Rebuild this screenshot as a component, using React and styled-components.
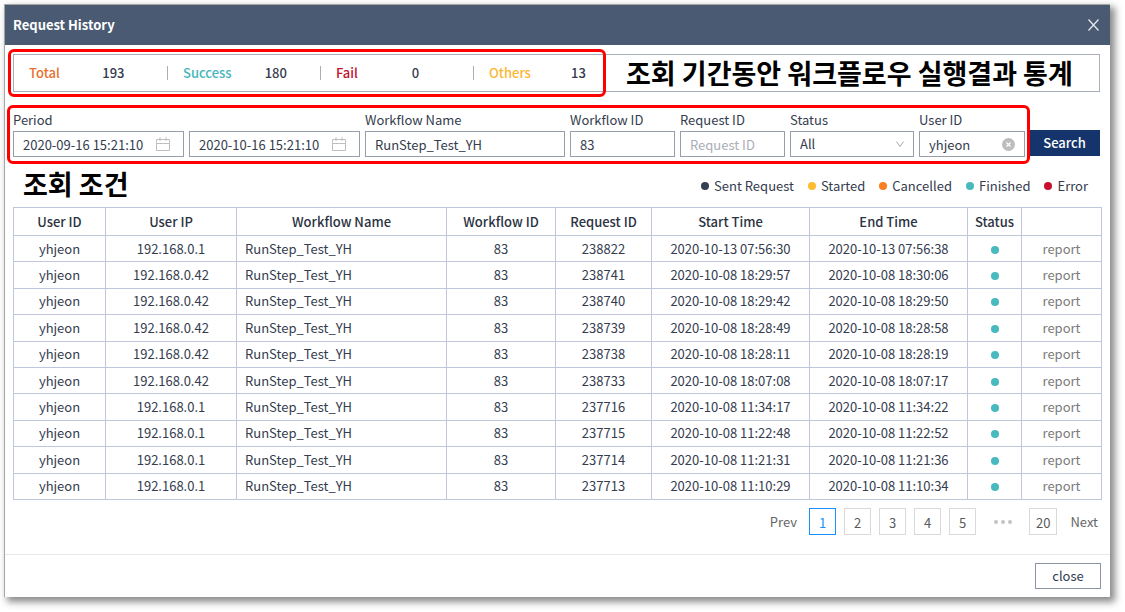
import React, { useState } from "react";
import styled, { createGlobalStyle } from "styled-components";

const GlobalStyle = createGlobalStyle`
  *, *::before, *::after { box-sizing: border-box; }
  body {
    margin: 0;
    background: #fff;
    color: #343c4e;
    font: 400 13px/20px "Noto Sans CJK KR", "Noto Sans", sans-serif;
  }
  button, input, select { font: inherit; color: inherit; margin: 0; }
`;

const Dialog = styled.section`
  margin: 4px 15px 14px 4px;
  border: 1px solid #a6a6a6;
  border-width: 1px 0 0 1px;
  background: #fff;
  box-shadow: 4px 4px 7px 1px #8c8c8c;
`;

const Header = styled.header`
  display: flex;
  align-items: center;
  justify-content: space-between;
  height: 40px;
  padding: 0 11px 0 8px;
  background: #4a5a73;
  color: #fff;
`;

const Title = styled.h1`
  margin: 0;
  font-size: 13px;
  line-height: 20px;
  font-weight: 700;
`;

const IconButton = styled.button`
  display: flex;
  padding: 0;
  border: 0;
  background: none;
  cursor: pointer;
`;

const Body = styled.div`
  padding: 9px 10px 0 8px;
`;

const Stats = styled.div`
  position: relative;
  display: flex;
  align-items: center;
  height: 38px;
  border: 1px solid #a9afb9;
`;

const Stat = styled.div`
  display: flex;
  align-items: center;
  flex: 0 0 153px;
  padding-left: 15px;
  line-height: 14px;
  & + & { border-left: 1px solid #a9afb9; }
`;

const StatLabel = styled.span`
  font-weight: 500;
  color: ${(p) => p.$color};
`;

const StatValue = styled.span`
  flex: 1;
  text-align: center;
  font-weight: 500;
`;

const Note = styled.strong`
  color: #000;
  font-size: 27px;
  line-height: 30px;
  font-weight: 700;
  white-space: nowrap;
`;

const Highlight = styled.span`
  position: absolute;
  inset: ${(p) => p.$inset};
  border: 3px solid #f00;
  border-radius: 6px;
  pointer-events: none;
`;

const FilterBar = styled.form`
  display: flex;
  align-items: flex-end;
  gap: 4px;
  margin-top: 18px;
`;

const Filters = styled.div`
  position: relative;
  flex: 1;
  display: grid;
  grid-template-columns: 347fr 200fr 105fr 105fr 124fr 106fr;
  gap: 5px;
`;

const Field = styled.div`
  min-width: 0;
`;

const Label = styled.label`
  display: block;
  height: 21px;
  white-space: nowrap;
`;

const Range = styled.div`
  display: grid;
  grid-template-columns: 1fr 1fr;
  gap: 5px;
`;

const Control = styled.div`
  display: flex;
  align-items: center;
  height: 26px;
  padding: 0 ${(p) => p.$end || 9}px 0 9px;
  border: 1px solid #979eaa;
  background: #fff;
  svg { flex: none; }
`;

const TextInput = styled.input`
  flex: 1;
  min-width: 0;
  width: 100%;
  height: 24px;
  padding: 0;
  border: 0;
  outline: 0;
  background: none;
  &::placeholder { color: #a9aeb8; opacity: 1; }
`;

const Select = styled.select`
  flex: 1;
  min-width: 0;
  height: 24px;
  padding: 0;
  border: 0;
  outline: 0;
  appearance: none;
  background: none;
`;

const SearchButton = styled.button`
  width: 71px;
  height: 26px;
  margin-bottom: 1px;
  padding: 0;
  border: 0;
  background: #14346b;
  color: #fff;
  font-weight: 500;
  cursor: pointer;
`;

const LegendRow = styled.div`
  display: flex;
  align-items: center;
  justify-content: space-between;
  height: 50px;
  padding: 3px 12px 0 10px;
`;

const Legend = styled.ul`
  display: flex;
  gap: 14px;
  margin: 0;
  padding: 5px 0 0;
  list-style: none;
`;

const LegendItem = styled.li`
  display: flex;
  align-items: center;
  gap: 5px;
`;

const Dot = styled.span`
  display: inline-block;
  width: 8px;
  height: 8px;
  border-radius: 50%;
  background: ${(p) => p.$color};
`;

const Table = styled.table`
  width: 100%;
  height: 293px;
  table-layout: fixed;
  border-collapse: collapse;
`;

const Th = styled.th`
  height: 28px;
  padding: 0;
  border: 1px solid #c0c7dc;
  font-weight: 500;
  color: #2b3342;
`;

const Td = styled.td`
  padding: 0 8px;
  border: 1px solid #c0c7dc;
  line-height: 20px;
  text-align: ${(p) => p.$align || "center"};
  white-space: nowrap;
`;

const ReportLink = styled.a`
  color: #7b7b7b;
  text-decoration: none;
`;

const Pager = styled.nav`
  display: flex;
  align-items: center;
  justify-content: flex-end;
  gap: 8px;
  margin-top: 8px;
  padding-right: 2px;
`;

const PageText = styled.button`
  padding: 0;
  margin: ${(p) => p.$margin};
  border: 0;
  background: none;
  color: #666;
  cursor: pointer;
`;

const PageButton = styled.button`
  min-width: 27px;
  height: 27px;
  padding: 2px 6px 0;
  border: 1px solid ${(p) => (p.$active ? "#1890ff" : "#d9d9d9")};
  background: #fff;
  color: ${(p) => (p.$active ? "#1890ff" : "#595959")};
  cursor: pointer;
`;

const Ellipsis = styled.span`
  display: flex;
  justify-content: center;
  gap: 3px;
  width: 37px;
  i { width: 4px; height: 4px; border-radius: 50%; background: #c4c4c4; }
`;

const Footer = styled.footer`
  display: flex;
  justify-content: flex-end;
  margin-top: 19px;
  padding: 8px 9px;
  border-top: 1px solid #e8e8e8;
`;

const CloseButton = styled.button`
  width: 66px;
  height: 26px;
  padding: 0;
  border: 1px solid #8d95a5;
  background: #fff;
  cursor: pointer;
`;

const CalendarIcon = () => (
  <svg width="14" height="14" viewBox="0 0 14 14" fill="none" stroke="#bfbfbf" aria-hidden="true">
    <path d="M.5 2.5h13v11H.5zM.5 6.5h13M4 0v4M10 0v4" />
  </svg>
);

const ChevronIcon = () => (
  <svg width="8" height="8" viewBox="0 0 8 8" fill="none" stroke="#a8a8a8" aria-hidden="true">
    <path d="M.5 1.5 4 6.5l3.500-5" />
  </svg>
);

const ClearIcon = () => (
  <svg width="13" height="13" viewBox="0 0 13 13" aria-hidden="true">
    <circle cx="6.500" cy="6.500" r="6.500" fill="#bdbdbd" />
    <path d="m4.500 4.500 4 4m0-4-4 4" stroke="#fff" strokeWidth="1.200" />
  </svg>
);

const CrossIcon = () => (
  <svg width="11" height="12" viewBox="0 0 11 12" fill="none" stroke="#e4e7ec" strokeWidth="1.300" aria-hidden="true">
    <path d="m.5.5 10 11m0-11-10 11" />
  </svg>
);

const stats = [
  ["Total", 193, "#e8702c"],
  ["Success", 180, "#48b6bb"],
  ["Fail", 0, "#c4122f"],
  ["Others", 13, "#fbb632"],
];

const legend = [
  ["Sent Request", "#343f52"],
  ["Started", "#fdbb30"],
  ["Cancelled", "#fb7e23"],
  ["Finished", "#48b9be"],
  ["Error", "#c8102e"],
];

const columns = [
  ["User ID", 92],
  ["User IP", 131],
  ["Workflow Name", 210],
  ["Workflow ID", 109],
  ["Request ID", 96],
  ["Start Time", 158],
  ["End Time", 158],
  ["Status", 54],
  ["", 80],
];

const rows = [
  ["192.168.0.1", 238822, "2020-10-13 07:56:30", "2020-10-13 07:56:38"],
  ["192.168.0.42", 238741, "2020-10-08 18:29:57", "2020-10-08 18:30:06"],
  ["192.168.0.42", 238740, "2020-10-08 18:29:42", "2020-10-08 18:29:50"],
  ["192.168.0.42", 238739, "2020-10-08 18:28:49", "2020-10-08 18:28:58"],
  ["192.168.0.42", 238738, "2020-10-08 18:28:11", "2020-10-08 18:28:19"],
  ["192.168.0.42", 238733, "2020-10-08 18:07:08", "2020-10-08 18:07:17"],
  ["192.168.0.1", 237716, "2020-10-08 11:34:17", "2020-10-08 11:34:22"],
  ["192.168.0.1", 237715, "2020-10-08 11:22:48", "2020-10-08 11:22:52"],
  ["192.168.0.1", 237714, "2020-10-08 11:21:31", "2020-10-08 11:21:36"],
  ["192.168.0.1", 237713, "2020-10-08 11:10:29", "2020-10-08 11:10:34"],
];

export default function App() {
  const [page, setPage] = useState(1);
  const [user, setUser] = useState("yhjeon");

  return (
    <>
      <GlobalStyle />
      <Dialog role="dialog" aria-labelledby="title">
        <Header>
          <Title id="title">Request History</Title>
          <IconButton type="button" aria-label="Close dialog"><CrossIcon /></IconButton>
        </Header>
        <Body>
          <Stats>
            {stats.map(([name, value, color]) => (
              <Stat key={name}>
                <StatLabel $color={color}>{name}</StatLabel>
                <StatValue>{value}</StatValue>
              </Stat>
            ))}
            <Highlight $inset="-6px 493px -6px -6px" />
            <Note>조회 기간동안 워크플로우 실행결과 통계</Note>
          </Stats>

          <FilterBar onSubmit={(e) => e.preventDefault()}>
            <Filters>
              <Field>
                <Label htmlFor="from">Period</Label>
                <Range>
                  <Control $end={13}><TextInput id="from" defaultValue="2020-09-16 15:21:10" /><CalendarIcon /></Control>
                  <Control $end={13}><TextInput aria-label="Period end" defaultValue="2020-10-16 15:21:10" /><CalendarIcon /></Control>
                </Range>
              </Field>
              <Field>
                <Label htmlFor="name">Workflow Name</Label>
                <Control><TextInput id="name" defaultValue="RunStep_Test_YH" /></Control>
              </Field>
              <Field>
                <Label htmlFor="workflow">Workflow ID</Label>
                <Control><TextInput id="workflow" defaultValue="83" /></Control>
              </Field>
              <Field>
                <Label htmlFor="request">Request ID</Label>
                <Control><TextInput id="request" placeholder="Request ID" /></Control>
              </Field>
              <Field>
                <Label htmlFor="status">Status</Label>
                <Control>
                  <Select id="status"><option>All</option></Select>
                  <ChevronIcon />
                </Control>
              </Field>
              <Field>
                <Label htmlFor="user">User ID</Label>
                <Control>
                  <TextInput id="user" value={user} onChange={(e) => setUser(e.target.value)} />
                  <IconButton type="button" aria-label="Clear user ID" onClick={() => setUser("")}><ClearIcon /></IconButton>
                </Control>
              </Field>
              <Highlight $inset="-5px -5px -7px -6px" />
            </Filters>
            <SearchButton type="submit">Search</SearchButton>
          </FilterBar>

          <LegendRow>
            <Note>조회 조건</Note>
            <Legend>
              {legend.map(([name, color]) => (
                <LegendItem key={name}><Dot $color={color} />{name}</LegendItem>
              ))}
            </Legend>
          </LegendRow>

          <Table>
            <colgroup>
              {columns.map(([name, width]) => <col key={name} width={width} />)}
            </colgroup>
            <thead>
              <tr>{columns.map(([name]) => <Th key={name} scope="col">{name}</Th>)}</tr>
            </thead>
            <tbody>
              {rows.map(([ip, id, start, end]) => (
                <tr key={id}>
                  <Td>yhjeon</Td>
                  <Td>{ip}</Td>
                  <Td $align="left">RunStep_Test_YH</Td>
                  <Td>83</Td>
                  <Td>{id}</Td>
                  <Td>{start}</Td>
                  <Td>{end}</Td>
                  <Td><Dot $color="#48b9be" role="img" aria-label="Finished" /></Td>
                  <Td><ReportLink href="#report">report</ReportLink></Td>
                </tr>
              ))}
            </tbody>
          </Table>

          <Pager aria-label="Pages">
            <PageText type="button" $margin="0 4px 0 0">Prev</PageText>
            {[1, 2, 3, 4, 5].map((n) => (
              <PageButton key={n} type="button" $active={n === page} onClick={() => setPage(n)}>{n}</PageButton>
            ))}
            <Ellipsis><i /><i /><i /></Ellipsis>
            <PageButton type="button" $active={page === 20} onClick={() => setPage(20)}>20</PageButton>
            <PageText type="button" $margin="0 0 0 5px">Next</PageText>
          </Pager>
        </Body>
        <Footer>
          <CloseButton type="button">close</CloseButton>
        </Footer>
      </Dialog>
    </>
  );
}
